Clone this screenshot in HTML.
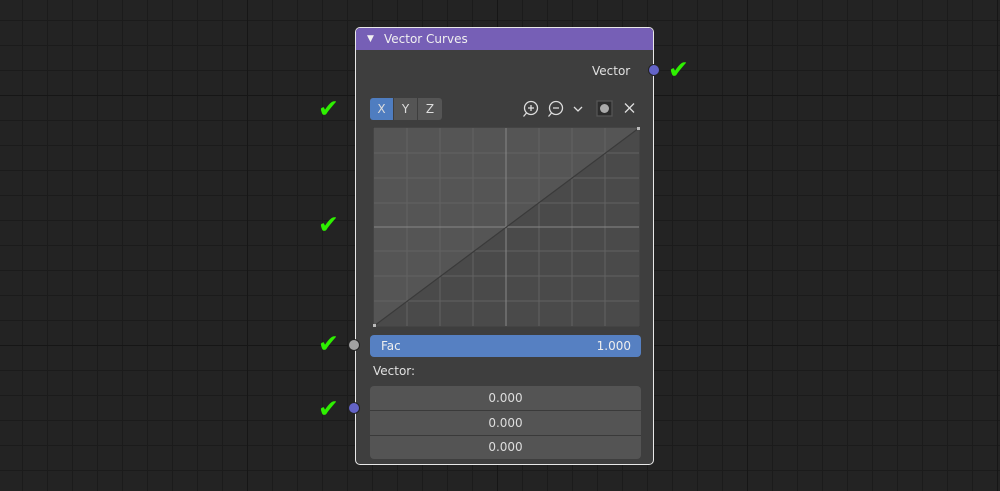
<!DOCTYPE html><html><head><style>
body{margin:0;width:1000px;height:491px;overflow:hidden;background-color:#232323;
background-image:linear-gradient(#161616 1px,transparent 1px),linear-gradient(90deg,#161616 1px,transparent 1px),linear-gradient(#1b1b1b 1px,transparent 1px),linear-gradient(90deg,#1b1b1b 1px,transparent 1px);
background-size:250px 250px,250px 250px,25px 25px,25px 25px;background-position:0 95px,-3px 0,0 20px,22px 0;
font-family:"DejaVu Sans","Liberation Sans",sans-serif;position:relative}
.a{position:absolute}
.node{left:355px;top:27px;width:297px;height:436px;background:#3e3e3e;border:1px solid #e8e8e8;border-radius:5px;overflow:hidden}
.hdr{left:0;top:0;width:297px;height:22px;background:#765fb6;color:#f0f0f0;font-size:12px;line-height:22px}
.sock{width:10px;height:10px;border-radius:50%;border:1px solid #222}
.chk{color:#2ef000;font-size:25px;line-height:26px;font-style:italic}
.t{color:#e0e0e0;font-size:12px}
.btn{height:22px;line-height:22px;text-align:center;color:#ddd;font-size:12px}
</style></head><body>
<div class="a node">
<div class="a hdr"><span style="position:absolute;left:11px;top:0;font-size:9px">▼</span><span style="position:absolute;left:28px">Vector Curves</span></div>
<div class="a t" style="left:236px;top:36px">Vector</div>
<div class="a btn" style="left:14px;top:70px;width:23px;background:#4f7dc0;border-radius:3px 0 0 3px">X</div>
<div class="a btn" style="left:38px;top:70px;width:23px;background:#555">Y</div>
<div class="a btn" style="left:62px;top:70px;width:24px;background:#555;border-radius:0 3px 3px 0">Z</div>
<svg class="a" style="left:163px;top:70px" width="120" height="22" stroke="#ddd" fill="none" stroke-width="1.3">
<circle cx="12" cy="10" r="6.5"/><path d="M12 7v6M9 10h6M7.5 15l-3 3.5"/>
<circle cx="37" cy="10" r="6.5"/><path d="M34 10h6M32.5 15l-3 3.5"/>
<path d="M55 9l4 4 4-4"/>
<rect x="78" y="3" width="15" height="15" fill="#2c2c2c" stroke="#555"/><circle cx="85.5" cy="10.5" r="4.5" fill="#aaa" stroke="none"/>
<path d="M106 5.5l9 9M115 5.5l-9 9"/></svg>
<svg class="a" style="left:17px;top:99px" width="267" height="200">
<rect x="0" y="0" width="267" height="200" fill="#555" stroke="#333"/>
<polygon points="1,199 266,1 266,199" fill="#4a4a4a"/>
<g stroke="#626262" stroke-width="1">
<path d="M34 1v198M67 1v198M100 1v198M166 1v198M199 1v198M232 1v198M1 26h265M1 51h265M1 76h265M1 124h265M1 149h265M1 174h265"/></g>
<path d="M133 1v198M1 100h265" stroke="#888"/>
<path d="M1 199L266 1" stroke="#3a3a3a" stroke-width="1.2"/>
<rect x="264" y="0" width="3" height="3" fill="#bbb"/><rect x="0" y="197" width="3" height="3" fill="#bbb"/>
</svg>
<div class="a" style="left:14px;top:307px;width:271px;height:22px;background:#5680c2;border-radius:4px;color:#eee;font-size:12px;line-height:22px"><span style="position:absolute;left:11px">Fac</span><span style="position:absolute;right:10px">1.000</span></div>
<div class="a t" style="left:17px;top:336px">Vector:</div>
<div class="a" style="left:14px;top:358px;width:271px;height:73px;background:#545454;border-radius:4px;overflow:hidden">
<div class="btn" style="height:24px;line-height:24px;border-bottom:1px solid #3a3a3a">0.000</div>
<div class="btn" style="height:24px;line-height:24px;border-bottom:1px solid #3a3a3a">0.000</div>
<div class="btn" style="height:23px;line-height:23px">0.000</div></div>
</div>
<div class="a sock" style="left:648px;top:64px;background:#6363c7"></div>
<div class="a sock" style="left:348px;top:339px;background:#a1a1a1"></div>
<div class="a sock" style="left:348px;top:402px;background:#6363c7"></div>
<div class="a chk" style="left:668px;top:57px">✔</div>
<div class="a chk" style="left:318px;top:96px">✔</div>
<div class="a chk" style="left:318px;top:212px">✔</div>
<div class="a chk" style="left:318px;top:331px">✔</div>
<div class="a chk" style="left:318px;top:396px">✔</div>
</body></html>
